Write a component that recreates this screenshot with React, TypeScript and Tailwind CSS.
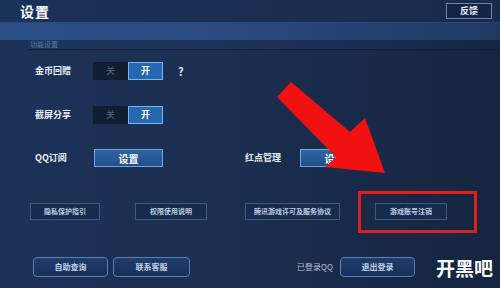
export default function App() {
  const font = { fontFamily: '"Noto Sans CJK SC", "Noto Sans", sans-serif' };

  return (
    <div
      className="relative w-[500px] h-[288px] overflow-hidden bg-gradient-to-r from-[#1c3257] via-[#1a2e50] to-[#15253f] text-white"
      style={font}
    >
      {/* Header */}
      <div className="h-[23px] flex items-center justify-between pl-[20px] pr-[8px] bg-gradient-to-r from-[#1b3259] to-[#182b4c] border-b border-[#2a4878]">
        <span className="text-[14px] font-bold leading-none tracking-[1px]">设置</span>
        <button className="w-[46px] h-[16px] flex items-center justify-center border border-[#6a86ac] bg-[#13244a] text-[9px] font-bold text-[#e6ecf5]">
          反馈
        </button>
      </div>

      {/* Light band */}
      <div className="h-[17px] bg-gradient-to-r from-[#2c4f88] via-[#29497d] to-[#1f3963]" />

      {/* Section label */}
      <div className="h-[10px] ml-[28px] flex items-center border-b border-[#10203a] bg-gradient-to-r from-[#1f365c] to-transparent">
        <span className="text-[7px] leading-none text-[#5c789e] pl-[2px]">功能设置</span>
      </div>

      <div className="pl-[35px] pt-[12px] flex flex-col">
        {/* Row 1 */}
        <div className="flex items-center h-[18px]">
          <span className="w-[58px] text-[9px] font-bold text-[#e8eef7]">金币回赠</span>
          <Toggle />
          <span className="ml-[15px] text-[11px] font-bold text-[#dfe6f0]">?</span>
        </div>

        {/* Row 2 */}
        <div className="flex items-center h-[18px] mt-[26px]">
          <span className="w-[58px] text-[9px] font-bold text-[#e8eef7]">截屏分享</span>
          <Toggle />
        </div>

        {/* Row 3 */}
        <div className="flex items-center h-[18px] mt-[25px]">
          <span className="w-[59px] text-[9px] font-bold text-[#e8eef7]">QQ订阅</span>
          <BlueButton label="设置" />
          <span className="ml-[82px] w-[55px] text-[9px] font-bold text-[#e8eef7]">红点管理</span>
          <BlueButton label="设置" />
        </div>
      </div>

      {/* Row 4 */}
      <div className="pl-[30px] mt-[36px] flex items-center h-[17px]">
        <LinkButton label="隐私保护指引" w="w-[70px]" />
        <div className="ml-[35px]">
          <LinkButton label="权限使用说明" w="w-[72px]" />
        </div>
        <div className="ml-[38px]">
          <LinkButton label="腾讯游戏许可及服务协议" w="w-[95px]" />
        </div>
        <div className="ml-[35px]">
          <LinkButton label="游戏账号注销" w="w-[72px]" />
        </div>
      </div>

      {/* Row 5 */}
      <div className="pl-[33px] mt-[37px] flex items-center h-[20px]">
        <RoundButton label="自助查询" w="w-[75px]" />
        <div className="ml-[5px]">
          <RoundButton label="联系客服" w="w-[77px]" />
        </div>
        <span className="ml-[107px] w-[43px] shrink-0 whitespace-nowrap text-[8px] text-[#b7c3d4]">已登录QQ</span>
        <RoundButton label="退出登录" w="w-[75px]" />
        <span className="ml-[21px] shrink-0 whitespace-nowrap text-[19px] font-bold leading-none text-white">
          开黑吧
        </span>
      </div>

      {/* Red highlight box */}
      <div className="absolute left-[358px] top-[191px] w-[119px] h-[42px] border-[3px] border-[#e01e1e]" />

      {/* Red arrow */}
      <svg className="absolute inset-0" width="500" height="288" viewBox="0 0 500 288">
        <polygon
          points="291,82 350,132 365,118 385,173 325,167 336,157 277,97"
          fill="#f21111"
        />
      </svg>
    </div>
  );
}

function Toggle() {
  return (
    <div className="flex h-[18px]">
      <div className="w-[35px] h-full flex items-center justify-center bg-[#111d31] text-[9px] text-[#56667e]">
        关
      </div>
      <div className="w-[35px] h-full flex items-center justify-center bg-[#2667b2] border border-[#79b6f2] text-[9px] font-bold text-white">
        开
      </div>
    </div>
  );
}

function BlueButton({ label }: { label: string }) {
  return (
    <div className="w-[69px] h-[18px] shrink-0 flex items-center justify-center border border-[#74a6dc] bg-gradient-to-b from-[#2f64a4] to-[#234f88] text-[10px] font-bold text-white">
      {label}
    </div>
  );
}

function LinkButton({ label, w }: { label: string; w: string }) {
  return (
    <div
      className={`${w} h-[17px] shrink-0 flex items-center justify-center border border-[#3d5a84] bg-[#172b4d] text-[7px] font-bold text-[#bfcbe0] whitespace-nowrap`}
    >
      {label}
    </div>
  );
}

function RoundButton({ label, w }: { label: string; w: string }) {
  return (
    <div
      className={`${w} h-[20px] shrink-0 flex items-center justify-center rounded-[4px] border border-[#5a80b3] bg-gradient-to-b from-[#1f3c6a] to-[#18305a] text-[8px] font-bold text-[#c3d0e3]`}
    >
      {label}
    </div>
  );
}
